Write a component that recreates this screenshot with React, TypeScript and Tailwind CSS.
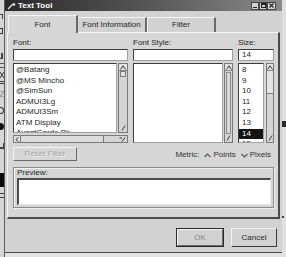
import React from "react";

const FONT = "[font-family:Liberation_Sans,Arial,sans-serif]";

function UpArrow() {
  return (
    <div className="h-[7px] shrink-0 flex items-center justify-center border-b border-[#8a8a8a] bg-[#e2e2e2]">
      <svg width="6" height="5" viewBox="0 0 6 5">
        <path d="M0.5 4.5 L3 0.8 L5.5 4.5" fill="none" stroke="#3a3a3a" strokeWidth="1" />
      </svg>
    </div>
  );
}

function DownMark() {
  return (
    <div className="h-[8px] shrink-0 flex items-center justify-center">
      <svg width="5" height="6" viewBox="0 0 5 6">
        <path d="M1 5.5 L4 0.5" stroke="#3a3a3a" strokeWidth="1" />
      </svg>
    </div>
  );
}

function VScroll({ className, thumb }: { className: string; thumb?: React.ReactNode }) {
  return (
    <div className={`flex flex-col border border-[#7a7a7a] bg-[#d4d4d4] ${className}`}>
      <UpArrow />
      <div className="flex-1 flex flex-col">{thumb}</div>
      <DownMark />
    </div>
  );
}

const sunken =
  "bg-white border border-t-[#3c3c3c] border-l-[#3c3c3c] border-r-[#a0a0a0] border-b-[#a0a0a0]";

const fonts = ["@Batang", "@MS Mincho", "@SimSun", "ADMUI3Lg", "ADMUI3Sm", "ATM Display", "AvantGarde Bk"];
const sizes = ["8", "9", "10", "11", "12", "13", "14", "15"];

function Caret({ up }: { up: boolean }) {
  return (
    <svg width="7" height="5" viewBox="0 0 7 5">
      <path
        d={up ? "M0.5 4 L3.5 1 L6.5 4" : "M0.5 1 L3.5 4 L6.5 1"}
        fill="none"
        stroke="#555"
        strokeWidth="1.2"
      />
    </svg>
  );
}

export default function App() {
  return (
    <div className={`w-[286px] h-[257px] flex overflow-hidden bg-[#e2e2e2] text-[8px] text-[#262626] ${FONT}`}>
      {/* background app strip (partial toolbar icons) */}
      <div className="w-[5px] h-full shrink-0 flex flex-col items-start overflow-hidden bg-[#d6d6d6] border-r border-[#5a5a5a]">
        <div className="h-[14px] shrink-0" />
        <div className="h-[5px] w-[3px] shrink-0 border-t border-r border-[#444]" />
        <div className="h-[9px] shrink-0" />
        <div className="h-[6px] w-[3px] shrink-0 border border-l-0 border-[#333]" />
        <div className="h-[19px] shrink-0" />
        <div className="h-[6px] w-[3px] shrink-0 border-r-2 border-b border-[#444]" />
        <div className="h-[4px] shrink-0" />
        <div className="h-[5px] w-[4px] shrink-0 border-t border-b border-[#555]" />
        <div className="h-[4px] shrink-0" />
        <svg width="4" height="6" viewBox="0 0 4 6" className="shrink-0">
          <path d="M0 0 L4 6 M4 0 L0 6" stroke="#333" strokeWidth="1" />
        </svg>
        <div className="h-[3px] shrink-0" />
        <div className="h-[3px] w-[4px] shrink-0 border-t border-b border-[#444]" />
        <div className="h-[7px] shrink-0" />
        <svg width="4" height="6" viewBox="0 0 4 6" className="shrink-0">
          <path d="M0 0 L4 0 L0 6 L4 6" fill="none" stroke="#888" strokeWidth="1" />
        </svg>
        <div className="h-[10px] shrink-0" />
        <div className="h-[7px] w-[4px] shrink-0 rounded-r-full border border-l-0 border-[#333]" />
        <div className="h-[9px] shrink-0" />
        <div className="h-[7px] w-[4px] shrink-0 rounded-r-full bg-[#111]" />
        <div className="h-[13px] shrink-0" />
        <div className="h-[6px] w-[4px] shrink-0 border-r border-b-2 border-[#444]" />
        <div className="h-[24px] shrink-0" />
        <div className="h-[14px] w-[5px] shrink-0 bg-[#0a0a0a]" />
        <div className="h-[6px] shrink-0" />
        <div className="h-[5px] w-[4px] shrink-0 border-t border-b border-[#444]" />
      </div>

      {/* window */}
      <div className="w-[277px] h-[253px] shrink-0 flex flex-col bg-[#d2d2d2] border-b border-[#4a4a4a]">
        {/* title bar */}
        <div className="h-[11px] shrink-0 flex items-center bg-linear-to-r from-[#2a2a2a] via-[#555555] to-[#8a8a8a] pl-[2px] pr-[6px]">
          <svg width="10" height="8" viewBox="0 0 10 8" className="shrink-0">
            <path d="M1 7 L6 2" stroke="#e8e8e8" strokeWidth="1.3" />
            <path d="M7 0.5 L7.6 1.8 L9 2 L7.8 2.8 L8 4 L7 3.3 L6 4 L6.2 2.8 L5 2 L6.4 1.8 Z" fill="#f0f0f0" />
          </svg>
          <span className="ml-[1px] text-white font-bold text-[8px] leading-[11px]">Text Tool</span>
          <div className="flex-1" />
          <div className="flex">
            <div className="w-[8px] h-[8px] bg-[#d4d4d4] border border-[#444] flex items-end justify-center pb-[1px]">
              <div className="w-[4px] h-[1px] bg-[#222]" />
            </div>
            <div className="w-[8px] h-[8px] bg-[#d4d4d4] border border-[#444] flex items-center justify-center">
              <div className="w-[5px] h-[5px] border border-[#222] border-t-2" />
            </div>
            <div className="w-[9px] h-[8px] bg-[#d4d4d4] border border-[#444] flex items-center justify-center">
              <svg width="5" height="5" viewBox="0 0 5 5">
                <path d="M0.5 0.5 L4.5 4.5 M4.5 0.5 L0.5 4.5" stroke="#222" strokeWidth="1.1" />
              </svg>
            </div>
          </div>
        </div>

        {/* tabs */}
        <div className="h-[17px] shrink-0 mt-[4px] flex items-end pl-[3px]">
          <div className="relative z-10 -mb-[1px] w-[70px] h-[18px] bg-[#d6d6d6] border-t border-l border-r-2 border-t-[#f4f4f4] border-l-[#f4f4f4] border-r-[#6a6a6a] flex items-center justify-center leading-[10px]">
            Font
          </div>
          <div className="w-[69px] h-[15px] border-t border-r-2 border-t-[#f4f4f4] border-r-[#6a6a6a] flex items-center justify-center leading-[10px]">
            Font Information
          </div>
          <div className="w-[69px] h-[15px] border-t border-l border-r-2 border-t-[#f4f4f4] border-l-[#f4f4f4] border-r-[#6a6a6a] flex items-center justify-center leading-[10px]">
            Filter
          </div>
        </div>

        {/* panel */}
        <div className="mx-[2px] h-[187px] shrink-0 flex flex-col bg-[#d6d6d6] border-t border-l border-r-2 border-b-2 border-t-[#f4f4f4] border-l-[#f4f4f4] border-r-[#4a4a4a] border-b-[#4a4a4a] pl-[5px] pt-[5px]">
          <div className="h-[105px] flex gap-[5px]">
            {/* Font column */}
            <div className="w-[115px] flex flex-col">
              <div className="h-[9px] leading-[9px] mb-[2px]">Font:</div>
              <div className={`h-[12px] ${sunken}`} />
              <div className="h-[70px] mt-[2px] flex gap-[1px]">
                <div className={`w-[104px] overflow-hidden pl-[2px] pt-[1px] ${sunken}`}>
                  {fonts.map((f) => (
                    <div key={f} className="h-[10.5px] leading-[10.5px] whitespace-nowrap">
                      {f}
                    </div>
                  ))}
                </div>
                <VScroll
                  className="w-[10px]"
                  thumb={<div className="h-[6px] mx-[1px] border border-[#7a7a7a] bg-[#e4e4e4]" />}
                />
              </div>
              <div className="h-[8px] mt-[2px] flex items-stretch border border-[#7a7a7a] bg-[#d4d4d4]">
                <div className="w-[7px] border-r border-[#7a7a7a] bg-[#e2e2e2] flex items-center justify-center">
                  <svg width="4" height="5" viewBox="0 0 4 5">
                    <path d="M3.5 0.5 L0.8 2.5 L3.5 4.5" fill="none" stroke="#3a3a3a" strokeWidth="1" />
                  </svg>
                </div>
                <div className="w-[83px] border-r border-[#7a7a7a] bg-[#dcdcdc]" />
                <div className="flex-1" />
                <div className="w-[9px] flex items-center justify-center">
                  <svg width="7" height="5" viewBox="0 0 7 5">
                    <path d="M0.5 1 L3 1 M3 4.5 L6 0.5" fill="none" stroke="#3a3a3a" strokeWidth="1" />
                  </svg>
                </div>
              </div>
            </div>

            {/* Font style column */}
            <div className="w-[100px] flex flex-col">
              <div className="h-[9px] leading-[9px] mb-[2px]">Font Style:</div>
              <div className={`h-[12px] ${sunken}`} />
              <div className="h-[80px] mt-[2px] flex gap-[1px]">
                <div className={`w-[90px] ${sunken}`} />
                <VScroll
                  className="w-[9px]"
                  thumb={<div className="flex-1 mx-[1px] mt-[1px] border border-[#8a8a8a] bg-[#dadada]" />}
                />
              </div>
            </div>

            {/* Size column */}
            <div className="w-[36px] flex flex-col">
              <div className="h-[9px] leading-[9px] mb-[2px]">Size:</div>
              <div className={`h-[12px] pl-[3px] leading-[10px] ${sunken}`}>14</div>
              <div className="h-[80px] mt-[2px] flex gap-[2px]">
                <div className={`w-[26px] overflow-hidden pt-[1px] ${sunken}`}>
                  {sizes.map((s) => (
                    <div
                      key={s}
                      className={`h-[10.6px] leading-[10.6px] pl-[3px] ${s === "14" ? "bg-[#141414] text-white" : ""}`}
                    >
                      {s}
                    </div>
                  ))}
                </div>
                <VScroll
                  className="w-[8px]"
                  thumb={<div className="h-[23px] border-b border-[#7a7a7a] bg-[#e4e4e4]" />}
                />
              </div>
            </div>
          </div>

          {/* reset + metric row */}
          <div className="h-[14px] mt-[4px] flex items-center pr-[7px]">
            <div className="w-[64px] h-[14px] flex items-center justify-center border border-t-[#f4f4f4] border-l-[#f4f4f4] border-r-[#6a6a6a] border-b-[#6a6a6a] text-[#a4a4a4] [text-shadow:1px_1px_0_#f0f0f0]">
              Reset Filter
            </div>
            <div className="flex-1" />
            <div className="flex items-center mt-[2px] text-[#333]">
              <span>Metric:</span>
              <span className="ml-[5px] flex items-center">
                <Caret up />
              </span>
              <span className="ml-[2px]">Points</span>
              <span className="ml-[5px] flex items-center">
                <Caret up={false} />
              </span>
              <span className="ml-[2px]">Pixels</span>
            </div>
          </div>

          {/* preview */}
          <div className="w-[261px] h-[41px] mt-[6px] flex flex-col border border-[#8a8a8a] shadow-[inset_1px_1px_0_#f2f2f2,1px_1px_0_#f2f2f2] pl-[3px] pt-[1px]">
            <div className="h-[8px] leading-[8px]">Preview:</div>
            <div className="w-[254px] h-[27px] mt-[1px] bg-white border-t-2 border-l-2 border-r border-b border-t-[#4a4a4a] border-l-[#4a4a4a] border-r-[#e8e8e8] border-b-[#e8e8e8]" />
          </div>
        </div>

        {/* buttons */}
        <div className="h-[19px] shrink-0 mt-[9px] flex justify-end gap-[7px] pr-[5px]">
          <div className="w-[48px] h-[19px] border border-[#2a2a2a]">
            <div className="w-full h-full flex items-center justify-center border border-t-[#f4f4f4] border-l-[#f4f4f4] border-r-[#6a6a6a] border-b-[#6a6a6a] text-[#888]">
              OK
            </div>
          </div>
          <div className="w-[46px] h-[19px] flex items-center justify-center border border-t-[#f4f4f4] border-l-[#f4f4f4] border-r-[#3a3a3a] border-b-[#3a3a3a] text-[#2a2a2a]">
            Cancel
          </div>
        </div>
      </div>

      {/* right strip */}
      <div className="w-[4px] h-full shrink-0 flex flex-col bg-[#e0e0e0]">
        <div className="h-[121px] shrink-0" />
        <div className="h-[6px] shrink-0 bg-[#2a2a2a]" />
        <div className="h-[89px] shrink-0" />
        <div className="h-[2px] w-[2px] shrink-0 bg-[#444]" />
      </div>
    </div>
  );
}
